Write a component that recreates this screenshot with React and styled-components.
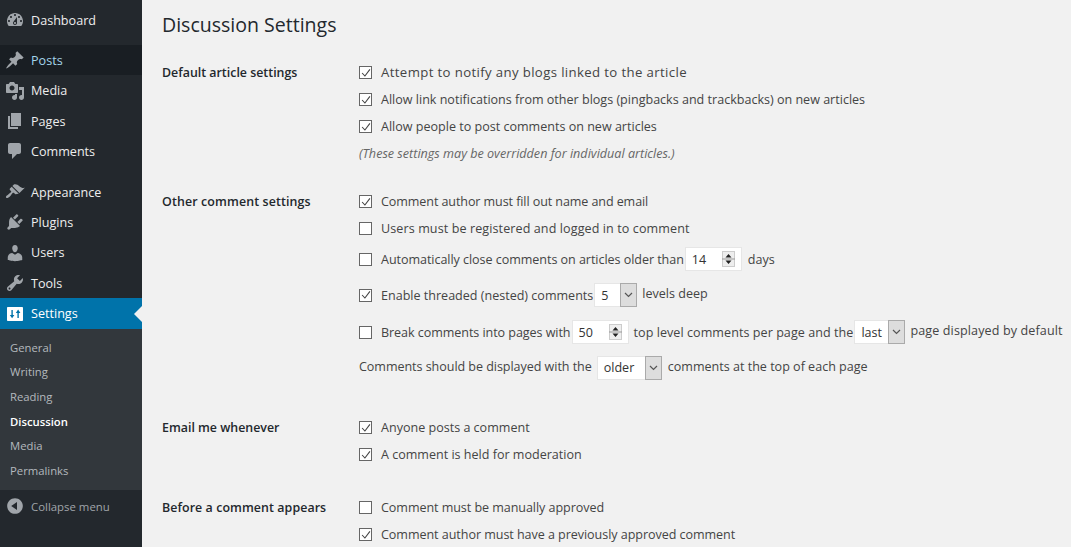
import React from "react";
import styled, { createGlobalStyle } from "styled-components";

const GlobalStyle = createGlobalStyle`
  html, body {
    margin: 0;
    padding: 0;
    height: 100%;
    overflow: hidden;
    background: #f1f1f1;
  }
  #root {
    height: 100%;
  }
`;

const icons = {
  dashboard:
    "M3.76 16h12.48c1.1-1.37 1.76-3.11 1.76-5 0-4.42-3.58-8-8-8s-8 3.58-8 8c0 1.89.66 3.63 1.76 5zM10 4c.55 0 1 .45 1 1s-.45 1-1 1-1-.45-1-1 .45-1 1-1zM6 6c.55 0 1 .45 1 1s-.45 1-1 1-1-.45-1-1 .45-1 1-1zm8 0c.55 0 1 .45 1 1s-.45 1-1 1-1-.45-1-1 .45-1 1-1zm-5.37 5.55L12 7v6c0 1.1-.9 2-2 2s-2-.9-2-2c0-.57.24-1.08.63-1.45zM4 10c.55 0 1 .45 1 1s-.45 1-1 1-1-.45-1-1 .45-1 1-1zm12 0c.55 0 1 .45 1 1s-.45 1-1 1-1-.45-1-1 .45-1 1-1zm-5 3c0-.55-.45-1-1-1s-1 .45-1 1 .45 1 1 1 1-.45 1-1z",
  posts:
    "M10.44 3.02l1.82-1.82 6.36 6.35-1.83 1.82c-1.05-.68-2.48-.57-3.41.36l-.75.75c-.92.93-1.04 2.35-.35 3.41l-1.83 1.82-2.41-2.41-2.8 2.79c-.42.42-3.38 2.71-3.8 2.29s1.86-3.39 2.28-3.81l2.79-2.79L4.1 9.36l1.83-1.82c1.05.69 2.48.57 3.4-.36l.75-.75c.93-.92 1.05-2.35.36-3.41z",
  media:
    "M13 11V4c0-.55-.45-1-1-1h-1.67L9 1H5L3.67 3H2c-.55 0-1 .45-1 1v7c0 .55.45 1 1 1h10c.55 0 1-.45 1-1zM7 4.5c1.38 0 2.5 1.12 2.5 2.5S8.38 9.5 7 9.5 4.5 8.38 4.5 7 5.62 4.5 7 4.5zM14 6h5v10.5c0 1.38-1.12 2.5-2.5 2.5S14 17.88 14 16.5s1.12-2.5 2.5-2.5c.17 0 .34.02.5.05V9h-3V6zm-4 8.05V13h2v3.5c0 1.38-1.12 2.5-2.5 2.5S7 17.88 7 16.5 8.12 14 9.5 14c.17 0 .34.02.5.05z",
  pages: "M6 15V2h10v13H6zm-1 1h8v2H3V5h2v11z",
  comments:
    "M5 2h9c1.1 0 2 .9 2 2v7c0 1.1-.9 2-2 2h-2l-5 5v-5H5c-1.1 0-2-.9-2-2V4c0-1.1.9-2 2-2z",
  appearance:
    "M14.48 11.06L7.41 3.99l1.5-1.5c.5-.56 2.3-.47 3.51.32 1.21.8 1.43 1.28 2.91 2.1 1.18.64 2.45 1.26 4.45.85zm-.71.71L6.7 4.7 4.93 6.47c-.39.39-.39 1.02 0 1.41l1.06 1.06c.39.39.39 1.03 0 1.42-.6.6-1.43 1.11-2.21 1.69-.35.26-.7.53-1.01.84C1.43 13.23.4 14.95 1.21 15.76c.8.8 2.53-.23 3.89-1.59.31-.31.58-.66.84-1.01.58-.78 1.09-1.61 1.69-2.21.39-.39 1.02-.39 1.41 0l1.06 1.06c.39.39 1.02.39 1.41 0z",
  plugins:
    "M13.11 4.36L9.87 7.6 8 5.73l3.24-3.24c.35-.34 1.05-.2 1.56.32.52.51.66 1.21.31 1.55zm-8 1.77l.91-1.12 9.01 9.01-1.19.84c-.71.71-2.63 1.16-3.82 1.16H6.14L4.9 17.26c-.59.59-1.54.59-2.12 0-.59-.58-.59-1.53 0-2.12l1.24-1.24v-3.88c0-1.13.4-3.19 1.09-3.89zm7.26 3.97l3.24-3.24c.34-.35 1.04-.21 1.55.31.52.51.66 1.21.31 1.55l-3.24 3.25z",
  users:
    "M10 9.25c-2.27 0-2.73-3.44-2.73-3.44C7 4.02 7.82 2 9.97 2c2.16 0 2.98 2.02 2.71 3.81 0 0-.41 3.44-2.68 3.44zm0 2.57L12.72 10c2.39 0 4.52 2.33 4.52 4.53v2.49s-3.65 1.13-7.24 1.13c-3.65 0-7.24-1.13-7.24-1.13v-2.49c0-2.25 1.94-4.48 4.47-4.48z",
  tools:
    "M16.68 9.77c-1.34 1.34-3.3 1.67-4.95.99l-5.41 6.52c-.99.99-2.59.99-3.58 0s-.99-2.59 0-3.57l6.52-5.42c-.68-1.65-.35-3.61.99-4.95 1.28-1.28 3.12-1.62 4.72-1.06l-2.89 2.89 2.82 2.82 2.86-2.87c.53 1.58.18 3.39-1.08 4.65zM3.81 16.21c.4.39 1.04.39 1.43 0 .4-.4.4-1.04 0-1.43-.39-.4-1.03-.4-1.43 0-.39.39-.39 1.03 0 1.43z",
  settings:
    "M3 3h14c.55 0 1 .45 1 1v12c0 .55-.45 1-1 1H3c-.55 0-1-.45-1-1V4c0-.55.45-1 1-1zm3.4 3v5H4.8l2.3 3.2L9.4 11H7.8V6H6.4zm6.7-.4L10.8 9h1.6v5h1.4V9h1.6l-2.3-3.4z",
  collapse:
    "M10 2.16c4.33 0 7.84 3.51 7.84 7.84s-3.51 7.84-7.84 7.84S2.16 14.33 2.16 10 5.71 2.16 10 2.16zm2 11.72V6.12L6.18 9.97z",
};

const Page = styled.div`
  display: flex;
  height: 547px;
  overflow: hidden;
  font-family: "Open Sans", "Noto Sans", sans-serif;
  font-size: 12.56px;
  color: #444;
  background: #f1f1f1;
`;

const Sidebar = styled.nav`
  flex: 0 0 142px;
  padding-top: 5px;
  background: #23282d;
`;

const MenuItem = styled.div`
  position: relative;
  display: flex;
  align-items: center;
  gap: 6px;
  height: ${(p) => p.$height || 30}px;
  margin-top: ${(p) => p.$gap || 0}px;
  padding-left: 5px;
  font-size: 12.6px;
  color: ${(p) => (p.$active ? "#fff" : p.$hover ? "#a5d5ea" : "#eee")};
  background: ${(p) => (p.$active ? "#0073aa" : p.$hover ? "#191e23" : "transparent")};

  ${(p) =>
    p.$active &&
    `
    &::after {
      content: "";
      position: absolute;
      right: 0;
      top: 50%;
      margin-top: -8px;
      border: 8px solid transparent;
      border-right-color: #f1f1f1;
      border-left-width: 0;
    }
  `}
`;

const MenuIcon = styled.svg`
  flex: none;
  width: 20px;
  height: 20px;
  fill: ${(p) => (p.$active ? "#fff" : "#a0a5aa")};
`;

const SubMenu = styled.div`
  display: flex;
  flex-direction: column;
  height: 161px;
  padding-top: 5.8px;
  box-sizing: border-box;
  background: #32373c;
`;

const SubItem = styled.div`
  display: flex;
  align-items: center;
  height: 24.7px;
  flex: none;
  padding-left: 10px;
  font-size: 11.3px;
  font-weight: ${(p) => (p.$current ? 600 : 400)};
  color: ${(p) => (p.$current ? "#fff" : "#b4b9be")};
`;

const Collapse = styled.div`
  display: flex;
  align-items: center;
  gap: 6px;
  height: 32px;
  padding-left: 5px;
  font-size: 11.4px;
  color: #a0a5aa;
`;

const Main = styled.main`
  flex: 1;
  min-width: 0;
  padding-left: 20px;
`;

const Title = styled.h1`
  margin: 0;
  height: 58px;
  padding-top: 9px;
  box-sizing: border-box;
  font-size: 19.55px;
  line-height: 32px;
  font-weight: 400;
  color: #23282d;
`;

const Section = styled.section`
  display: flex;
  margin-bottom: ${(p) => p.$after || 0}px;
`;

const Heading = styled.div`
  flex: 0 0 197px;
  padding-top: 6px;
  font-size: 12.4px;
  font-weight: 600;
  line-height: 18px;
  letter-spacing: ${(p) => p.$track || 0}px;
  color: #23282d;
`;

const Fields = styled.div`
  display: flex;
  flex-direction: column;
  padding-top: 1px;
`;

const Row = styled.div`
  display: flex;
  align-items: center;
  height: ${(p) => p.$height || 27}px;
  white-space: nowrap;
`;

const Box = styled.span`
  flex: none;
  display: flex;
  align-items: center;
  justify-content: center;
  width: 13px;
  height: 13px;
  margin-right: 9px;
  border: 1px solid #666;
  background: #fff;
  box-sizing: border-box;

  svg {
    width: 10px;
    height: 10px;
    fill: none;
    stroke: #444;
    stroke-width: 1.2;
  }
`;

const Label = styled.span`
  margin-left: ${(p) => p.$left || 0}px;
  margin-bottom: ${(p) => p.$raise || 0}px;
  font-size: ${(p) => p.$size || 12.56}px;
  letter-spacing: ${(p) => p.$track || 0}px;
`;

const Note = styled.em`
  font-size: 12.6px;
  color: #666;
`;

const Control = styled.span`
  flex: none;
  display: flex;
  align-items: center;
  justify-content: space-between;
  width: ${(p) => p.$width}px;
  height: 24px;
  box-sizing: border-box;
  margin-left: ${(p) => p.$left || 0}px;
  padding-left: 6px;
  border: 1px solid #e6e6e6;
  background: #fff;
  color: #333;
`;

const Spinner = styled.svg`
  width: 13px;
  height: 16px;
  margin-right: 6px;
`;

const Arrow = styled.span`
  display: flex;
  align-items: center;
  justify-content: center;
  width: 17px;
  height: 24px;
  margin: -1px;
  box-sizing: border-box;
  border: 1px solid #aaa;
  background: #ddd;

  svg {
    width: 9px;
    height: 6px;
    fill: none;
    stroke: #555;
    stroke-width: 1.2;
  }
`;

const Checkbox = ({ checked }) => (
  <Box>
    {checked && (
      <svg viewBox="0 0 11 11">
        <path d="M1.2 5.5 4.3 8.8 9.8 1.6" />
      </svg>
    )}
  </Box>
);

const NumberBox = ({ value, left }) => (
  <Control $width={57} $left={left}>
    {value}
    <Spinner viewBox="0 0 13 16">
      <rect x="0.5" y="0.5" width="12" height="15" fill="#eee" stroke="#ccc" />
      <path d="M6.5 3 9.5 6.5H3.5z M6.5 13 3.5 9.5H9.5z" fill="#222" />
      <path d="M0 8H13" stroke="#999" />
    </Spinner>
  </Control>
);

const SelectBox = ({ value, width, left }) => (
  <Control $width={width} $left={left}>
    {value}
    <Arrow>
      <svg viewBox="0 0 9 6">
        <path d="M1 1 4.5 4.5 8 1" />
      </svg>
    </Arrow>
  </Control>
);

const menu = [
  { key: "dashboard", label: "Dashboard" },
  { key: "posts", label: "Posts", hover: true, gap: 10 },
  { key: "media", label: "Media", height: 31 },
  { key: "pages", label: "Pages" },
  { key: "comments", label: "Comments" },
  { key: "appearance", label: "Appearance", gap: 11 },
  { key: "plugins", label: "Plugins" },
  { key: "users", label: "Users", height: 31 },
  { key: "tools", label: "Tools" },
  { key: "settings", label: "Settings", active: true, height: 31 },
];
const subItems = ["General", "Writing", "Reading", "Discussion", "Media", "Permalinks"];

export default function App() {
  return (
    <Page>
      <GlobalStyle />
      <Sidebar>
        {menu.map((item) => (
          <MenuItem
            key={item.key}
            $active={item.active}
            $hover={item.hover}
            $gap={item.gap}
            $height={item.height}
          >
            <MenuIcon viewBox="0 0 20 20" $active={item.active}>
              <path fillRule="evenodd" d={icons[item.key]} />
            </MenuIcon>
            {item.label}
          </MenuItem>
        ))}
        <SubMenu>
          {subItems.map((s) => (
            <SubItem key={s} $current={s === "Discussion"}>
              {s}
            </SubItem>
          ))}
        </SubMenu>
        <Collapse>
          <MenuIcon viewBox="0 0 20 20">
            <path fillRule="evenodd" d={icons.collapse} />
          </MenuIcon>
          Collapse menu
        </Collapse>
      </Sidebar>

      <Main>
        <Title>Discussion Settings</Title>

        <Section $after={20}>
          <Heading>Default article settings</Heading>
          <Fields>
            <Row><Checkbox checked /><Label $size={13.2} $track={0.37} $raise={2}>Attempt to notify any blogs linked to the article</Label></Row>
            <Row><Checkbox checked />Allow link notifications from other blogs (pingbacks and trackbacks) on new articles</Row>
            <Row><Checkbox checked />Allow people to post comments on new articles</Row>
            <Row><Note>(These settings may be overridden for individual articles.)</Note></Row>
          </Fields>
        </Section>

        <Section $after={28}>
          <Heading $track={0.13}>Other comment settings</Heading>
          <Fields>
            <Row><Checkbox checked /><Label $track={-0.09}>Comment author must fill out name and email</Label></Row>
            <Row><Checkbox /><Label $track={0.1}>Users must be registered and logged in to comment</Label></Row>
            <Row $height={34}>
              <Checkbox /><Label $track={-0.05}>Automatically close comments on articles older than</Label>
              <NumberBox value="14" left={1} />
              <Label $left={6}>days</Label>
            </Row>
            <Row $height={38}>
              <Checkbox checked />Enable threaded (nested) comments
              <SelectBox value="5" width={43} left={1} />
              <Label $left={5} $raise={3}>levels deep</Label>
            </Row>
            <Row $height={36}>
              <Checkbox /><Label $track={-0.06}>Break comments into pages with</Label>
              <NumberBox value="50" left={1} />
              <Label $left={5} $track={0.06}>top level comments per page and the</Label>
              <SelectBox value="last" width={51} left={1} />
              <Label $left={5} $raise={3} $track={0.12}>page displayed by default</Label>
            </Row>
            <Row $height={35}>
              <Label $raise={2} $track={-0.05}>Comments should be displayed with the</Label>
              <SelectBox value="older" width={65} left={5} />
              <Label $left={6} $raise={2}>comments at the top of each page</Label>
            </Row>
          </Fields>
        </Section>

        <Section $after={25}>
          <Heading>Email me whenever</Heading>
          <Fields>
            <Row><Checkbox checked />Anyone posts a comment</Row>
            <Row><Checkbox checked />A comment is held for moderation</Row>
          </Fields>
        </Section>

        <Section>
          <Heading $track={0.08}>Before a comment appears</Heading>
          <Fields>
            <Row><Checkbox /><Label $track={-0.06}>Comment must be manually approved</Label></Row>
            <Row><Checkbox checked /><Label $track={-0.05}>Comment author must have a previously approved comment</Label></Row>
          </Fields>
        </Section>
      </Main>
    </Page>
  );
}
